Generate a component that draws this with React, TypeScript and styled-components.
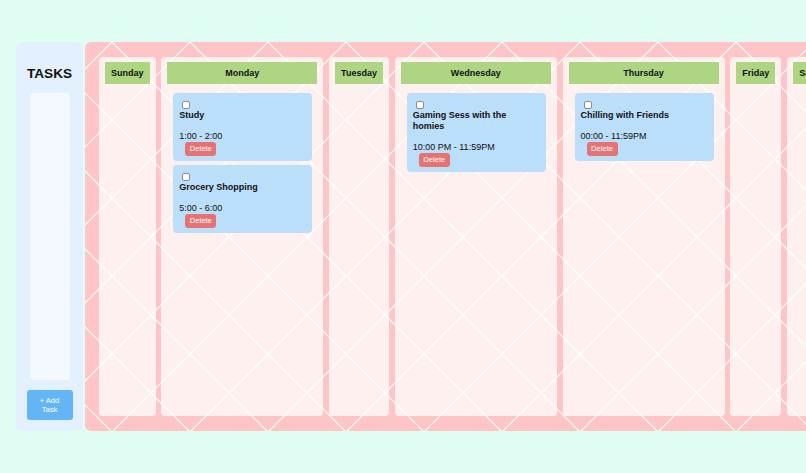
import React from 'react';
import styled, { createGlobalStyle } from 'styled-components';

type Task = { id: number; title: string; time: string };
type Day = { name: string; tasks: Task[] };

const days: Day[] = [
  { name: 'Sunday', tasks: [] },
  {
    name: 'Monday',
    tasks: [
      { id: 1, title: 'Study', time: '1:00 - 2:00' },
      { id: 2, title: 'Grocery Shopping', time: '5:00 - 6:00' },
    ],
  },
  { name: 'Tuesday', tasks: [] },
  {
    name: 'Wednesday',
    tasks: [{ id: 3, title: 'Gaming Sess with the homies', time: '10:00 PM - 11:59PM' }],
  },
  {
    name: 'Thursday',
    tasks: [{ id: 4, title: 'Chilling with Friends', time: '00:00 - 11:59PM' }],
  },
  { name: 'Friday', tasks: [] },
  { name: 'Saturday', tasks: [] },
];

export default function App() {
  return (
    <>
      <GlobalStyle />
      <Page>
        <Sidebar>
          <SidebarTitle>TASKS</SidebarTitle>
          <TaskPool />
          <AddButton type="button">+ Add Task</AddButton>
        </Sidebar>
        <Board>
          {days.map((day) => (
            <Column key={day.name}>
              <DayHeader>{day.name}</DayHeader>
              <CardList>
                {day.tasks.map((task) => (
                  <Card key={task.id}>
                    <Check />
                    <CardTitle>{task.title}</CardTitle>
                    <CardTime>{task.time}</CardTime>
                    <DeleteButton type="button">Delete</DeleteButton>
                  </Card>
                ))}
              </CardList>
            </Column>
          ))}
        </Board>
      </Page>
    </>
  );
}

const GlobalStyle = createGlobalStyle`
  html, body {
    margin: 0;
    padding: 0;
    background: #e0fdf3;
    font-family: "Liberation Sans", Arial, sans-serif;
    color: #111;
  }
`;

const Page = styled.div`
  display: flex;
  gap: 2px;
  padding: 42px 0 0 16px;
  height: 389px;
  overflow: hidden;
`;

const Sidebar = styled.aside`
  flex: 0 0 67px;
  display: flex;
  flex-direction: column;
  align-items: center;
  box-sizing: border-box;
  padding: 23px 0 11px;
  background: #e3f0fd;
  border-radius: 6px;
`;

const SidebarTitle = styled.h2`
  margin: 0 0 11px;
  font-size: 13.6px;
  line-height: 17px;
  font-weight: 700;
`;

const TaskPool = styled.div`
  flex: 1;
  width: 40px;
  background: #f4f9ff;
  border-radius: 4px;
`;

const AddButton = styled.button`
  margin-top: 10px;
  width: 46px;
  height: 30px;
  padding: 0 6px;
  border: none;
  border-radius: 3px;
  background: #64b5f6;
  color: #fff;
  font-family: inherit;
  font-size: 7.6px;
  line-height: 9px;
`;

const Board = styled.main`
  flex: 1;
  display: flex;
  gap: 5.8px;
  box-sizing: border-box;
  padding: 15px 0 15px 14px;
  border-radius: 6px 0 0 6px;
  overflow: hidden;
  background-color: #ffc5c6;
  background-image:
    linear-gradient(45deg, transparent calc(50% - 1.2px), rgba(255, 255, 255, 0.9) 50%, transparent calc(50% + 1.2px)),
    linear-gradient(135deg, transparent calc(50% - 1.2px), rgba(255, 255, 255, 0.9) 50%, transparent calc(50% + 1.2px));
  background-size: 78px 78px;
  background-position: 27px 0;
`;

const Column = styled.section`
  flex: 0 0 auto;
  display: flex;
  flex-direction: column;
  box-sizing: border-box;
  padding: 5px 6px;
  background: rgba(255, 255, 255, 0.74);
  border-radius: 4px;
`;

const DayHeader = styled.h3`
  margin: 0;
  height: 22px;
  padding: 0 6px;
  background: #aed581;
  font-size: 9px;
  font-weight: 700;
  line-height: 22px;
  text-align: center;
  white-space: nowrap;
`;

const CardList = styled.div`
  display: flex;
  flex-direction: column;
  gap: 4px;
  margin-top: 9px;
`;

const Card = styled.div`
  width: 139px;
  margin: 0 5px 0 6px;
  box-sizing: border-box;
  padding: 7px 6px 5px;
  background: #bbdefb;
  border-radius: 4px;
`;

const Check = styled.span`
  display: block;
  width: 8px;
  height: 8px;
  margin: 1px 0 0 3px;
  box-sizing: border-box;
  border: 1px solid #8a8a8a;
  border-radius: 2px;
  background: #fff;
`;

const CardTitle = styled.h4`
  margin: 0;
  padding-top: 1px;
  font-size: 9px;
  font-weight: 700;
  line-height: 11px;
`;

const CardTime = styled.p`
  margin: 10px 0 0;
  font-size: 9px;
  line-height: 11px;
`;

const DeleteButton = styled.button`
  display: block;
  margin: 0 0 0 6px;
  height: 14px;
  padding: 0 4.5px;
  border: none;
  border-radius: 3px;
  background: #e57373;
  color: #fff;
  font-family: inherit;
  font-size: 7.6px;
  line-height: 14px;
`;
